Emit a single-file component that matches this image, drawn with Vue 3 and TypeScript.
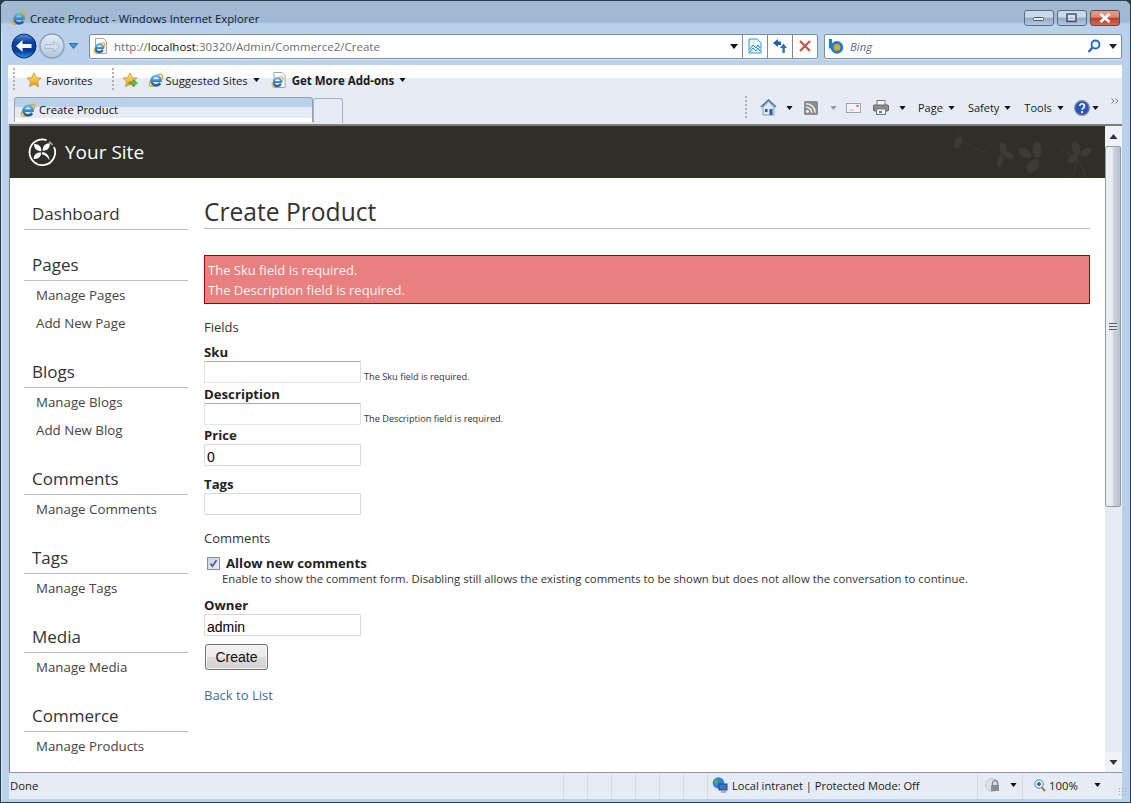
<script setup lang="ts">
interface MenuGroup {
  title: string
  items: string[]
}

const menu: MenuGroup[] = [
  { title: 'Dashboard', items: [] },
  { title: 'Pages', items: ['Manage Pages', 'Add New Page'] },
  { title: 'Blogs', items: ['Manage Blogs', 'Add New Blog'] },
  { title: 'Comments', items: ['Manage Comments'] },
  { title: 'Tags', items: ['Manage Tags'] },
  { title: 'Media', items: ['Manage Media'] },
  { title: 'Commerce', items: ['Manage Products'] },
]

const statusCells = [0, 1, 2, 3, 4, 5]
</script>

<template>
  <svg class="sprite" width="0" height="0">
    <defs>
      <linearGradient id="gold" x1="0" y1="0" x2="0" y2="1">
        <stop offset="0" stop-color="#fde27a" />
        <stop offset="1" stop-color="#ee9a16" />
      </linearGradient>
      <linearGradient id="backFill" x1="0" y1="0" x2="0" y2="1">
        <stop offset="0" stop-color="#5a92d8" />
        <stop offset="0.35" stop-color="#0b3fa0" />
        <stop offset="0.7" stop-color="#063a9a" />
        <stop offset="1" stop-color="#2a96ea" />
      </linearGradient>
      <linearGradient id="fwdFill" x1="0" y1="0" x2="0" y2="1">
        <stop offset="0" stop-color="#e4ecf5" />
        <stop offset="1" stop-color="#b3c6dd" />
      </linearGradient>
      <linearGradient id="ieBlue" x1="0" y1="0" x2="0" y2="1">
        <stop offset="0" stop-color="#5cb4ee" />
        <stop offset="1" stop-color="#1460b4" />
      </linearGradient>
      <symbol id="ie" viewBox="0 0 16 16">
        <ellipse cx="8" cy="8.3" rx="8" ry="3.8" transform="rotate(-40 8 8.3)" fill="none" stroke="#eda52a" stroke-width="1.5" />
        <path d="M4.4 8.6h8c0-2.8-1.7-4.6-4.3-4.6s-4.5 2.1-4.5 4.8 2 4.6 4.6 4.6c1.8 0 3.1-.8 4-2.2" fill="none" stroke="url(#ieBlue)" stroke-width="2.7" />
      </symbol>
      <symbol id="star" viewBox="0 0 16 16">
        <path d="M8 .8l2.2 4.7 5 .6-3.7 3.5 1 5.1L8 12.2l-4.5 2.5 1-5.1L.8 6.1l5-.6z" fill="url(#gold)" stroke="#c98a20" stroke-width=".7" />
      </symbol>
      <symbol id="drop" viewBox="0 0 8 5">
        <path d="M0 0h8L4 5z" />
      </symbol>
    </defs>
  </svg>

  <div class="win">
    <div class="title">
      <svg class="i16" viewBox="0 0 16 16"><use href="#ie" /></svg>
      <span class="title-text">Create Product - Windows Internet Explorer</span>
      <div class="caption">
        <div class="cap">
          <svg width="12" height="8" viewBox="0 0 12 8"><rect x=".5" y="3.5" width="10" height="3" rx="1" fill="#eef2f7" stroke="#47566b" /></svg>
        </div>
        <div class="cap">
          <svg width="12" height="10" viewBox="0 0 12 10"><rect x="1" y="1" width="9" height="7.5" fill="none" stroke="#47566b" stroke-width="1.5" /><rect x="3" y="3" width="5" height="3.5" fill="none" stroke="#eef2f7" /></svg>
        </div>
        <div class="cap close">
          <svg width="12" height="10" viewBox="0 0 12 10"><path d="M1.5 1l9 8M10.5 1l-9 8" stroke="#fff" stroke-width="2.6" /></svg>
        </div>
      </div>
    </div>

    <div class="addr">
      <svg class="nav" width="26" height="28" viewBox="0 0 26 28">
        <circle cx="13" cy="14" r="12" fill="url(#backFill)" stroke="#0b2d66" />
        <path d="M5 14l6.5-6v4h9v4h-9v4z" fill="#fff" />
      </svg>
      <svg class="nav fwd" width="26" height="28" viewBox="0 0 26 28">
        <circle cx="13" cy="14" r="12" fill="url(#fwdFill)" stroke="#8d9eb3" stroke-width="1.4" />
        <path d="M20.5 14.5l-6-5v3H6v4h8.5v3z" fill="#d4dfeb" stroke="#a2b3c8" stroke-width=".8" />
      </svg>
      <svg class="nav-drop" width="9" height="6" viewBox="0 0 8 5"><path d="M.3.3h7.4L4 4.7z" fill="#3aa0e0" stroke="#173b70" stroke-width=".6" /></svg>
      <div class="url-box">
        <svg class="page-ie" width="16" height="16" viewBox="0 0 16 16">
          <path d="M2.5 .5h8l3 3v12h-11z" fill="#fff" stroke="#9aa5b3" />
          <svg x="0" y="3" width="13" height="13" viewBox="0 0 16 16"><use href="#ie" /></svg>
        </svg>
        <span class="url"><span class="dim">http://</span>localhost<span class="dim">:30320/Admin/Commerce2/Create</span></span>
        <svg class="url-drop" width="8" height="5" viewBox="0 0 8 5" fill="#111"><use href="#drop" /></svg>
        <div class="url-btn">
          <svg width="16" height="16" viewBox="0 0 16 16">
            <path d="M2 1h8l4 4v10H2z" fill="#e9f6fd" stroke="#2a9ad8" />
            <path d="M3 11l3-4 3 3 2-3 2 3M3 14l3-4 3 3 2-3 2 3" fill="none" stroke="#2f8ccc" />
          </svg>
        </div>
        <div class="url-btn">
          <svg width="16" height="16" viewBox="0 0 16 16">
            <path d="M1 5l5-4v2.6h3V7H6v2z" fill="#1f5fa8" />
            <path d="M15 10l-3.6-4.5L8 10h2.4v5h2.4v-5z" fill="#2c72b8" />
          </svg>
        </div>
        <div class="url-btn">
          <svg width="14" height="14" viewBox="0 0 14 14"><path d="M2 2l10 10M12 2L2 12" stroke="#c0574c" stroke-width="2.3" /></svg>
        </div>
      </div>
      <div class="search-box">
        <svg width="18" height="16" viewBox="0 0 18 16">
          <path d="M2.5 1v9.5" stroke="#1d7fc9" stroke-width="3.2" />
          <circle cx="9" cy="9.4" r="4.8" fill="#f6a21f" stroke="#1d7fc9" stroke-width="3" />
        </svg>
        <span class="bing">Bing</span>
        <svg class="mag" width="14" height="15" viewBox="0 0 14 15">
          <circle cx="8.5" cy="5.5" r="4" fill="#e9f3fc" stroke="#2466b3" stroke-width="1.8" />
          <path d="M5.5 8.5L1.5 13" stroke="#2466b3" stroke-width="2.2" />
        </svg>
        <svg class="search-drop" width="8" height="5" viewBox="0 0 8 5" fill="#222"><use href="#drop" /></svg>
      </div>
    </div>

    <div class="favs">
      <i class="grip"></i>
      <svg class="fav-star" width="16" height="16" viewBox="0 0 16 16"><use href="#star" /></svg>
      <span class="fav-label first">Favorites</span>
      <i class="grip g2"></i>
      <svg class="i16 add" viewBox="0 0 16 16">
        <use href="#star" />
        <path d="M7 10h4V7.5l4.5 3.5-4.5 3.5V12H7z" fill="#5ac040" stroke="#2f8a28" stroke-width=".6" />
      </svg>
      <svg class="i16 sug" viewBox="0 0 16 16"><use href="#ie" /></svg>
      <span class="fav-label tight">Suggested Sites</span>
      <svg class="dd" width="7" height="4" viewBox="0 0 8 5"><use href="#drop" /></svg>
      <svg class="i16 addon" viewBox="0 0 16 16">
        <path d="M3 .5h8l3 3v12H3z" fill="#fff" stroke="#9aa5b3" />
        <svg x="0" y="3" width="13" height="13" viewBox="0 0 16 16"><use href="#ie" /></svg>
      </svg>
      <span class="fav-label bold">Get More Add-ons</span>
      <svg class="dd" width="7" height="4" viewBox="0 0 8 5"><use href="#drop" /></svg>
    </div>

    <div class="tabs">
      <div class="tab">
        <svg class="i16" viewBox="0 0 16 16"><use href="#ie" /></svg>
        <span>Create Product</span>
      </div>
      <div class="new-tab"></div>
      <div class="cmds">
        <i class="grip g3"></i>
        <svg class="home" width="17" height="17" viewBox="0 0 17 17">
          <path d="M1 8l7.5-7L16 8" fill="none" stroke="#3e78b4" stroke-width="1.6" />
          <path d="M3 8l5.5-5L14 8v8H3z" fill="#dfe7ef" stroke="#7f8ea0" stroke-width=".8" />
          <rect x="5" y="10" width="2.5" height="3" fill="#1f62a8" />
          <rect x="9.5" y="10" width="3" height="6" fill="#1f62a8" />
        </svg>
        <svg class="dd c1" width="7" height="4" viewBox="0 0 8 5"><use href="#drop" /></svg>
        <svg class="feed" width="14" height="14" viewBox="0 0 14 14">
          <rect width="14" height="14" rx="1.5" fill="#8d8d8d" />
          <circle cx="3.5" cy="10.5" r="1.4" fill="#eee" />
          <path d="M2.2 6.2a5.6 5.6 0 015.6 5.6M2.2 2.8a9 9 0 019 9" fill="none" stroke="#eee" stroke-width="1.6" />
        </svg>
        <svg class="dd c2" width="7" height="4" viewBox="0 0 8 5"><use href="#drop" /></svg>
        <svg class="mail" width="15" height="10" viewBox="0 0 15 10">
          <rect x=".5" y=".5" width="14" height="9" fill="#f4f4f4" stroke="#a5a5a5" />
          <path d="M3 7h5" stroke="#bdbdbd" />
          <rect x="10.5" y="2" width="2" height="2" fill="#d85a5a" />
        </svg>
        <svg class="printer" width="16" height="15" viewBox="0 0 16 15">
          <rect x="4" y=".5" width="8" height="5" fill="#fff" stroke="#777" />
          <rect x=".5" y="5" width="15" height="6" rx="1" fill="#8a8d92" stroke="#666" />
          <rect x="3.5" y="9" width="9" height="5.5" fill="#fff" stroke="#777" />
          <rect x="6" y="11" width="3" height="2" fill="#3d86c6" />
        </svg>
        <svg class="dd c3" width="7" height="4" viewBox="0 0 8 5"><use href="#drop" /></svg>
        <span class="cmd page">Page</span>
        <svg class="dd" width="7" height="4" viewBox="0 0 8 5"><use href="#drop" /></svg>
        <span class="cmd">Safety</span>
        <svg class="dd" width="7" height="4" viewBox="0 0 8 5"><use href="#drop" /></svg>
        <span class="cmd">Tools</span>
        <svg class="dd" width="7" height="4" viewBox="0 0 8 5"><use href="#drop" /></svg>
        <svg class="help" width="16" height="16" viewBox="0 0 16 16">
          <circle cx="8" cy="8" r="7.4" fill="#2a55b8" stroke="#8a93a3" stroke-width="1.2" />
          <path d="M5.8 6a2.3 2.3 0 114 1.6c-.9.8-1.7 1-1.7 2.2" fill="none" stroke="#fff" stroke-width="1.7" />
          <circle cx="8.1" cy="12.2" r="1.1" fill="#fff" />
        </svg>
        <svg class="dd c4" width="7" height="4" viewBox="0 0 8 5"><use href="#drop" /></svg>
        <svg class="more" width="8" height="6" viewBox="0 0 8 6"><path d="M.5.5L3 3 .5 5.5M4.5.5L7 3 4.5 5.5" fill="none" stroke="#6d7a8c" /></svg>
      </div>
    </div>

    <div class="pane">
      <div class="view">
        <header class="site">
          <svg class="logo" width="30" height="30" viewBox="0 0 30 30">
            <path d="M19.5 3.2A12.8 12.8 0 1 0 27 10" fill="none" stroke="#fff" stroke-width="1.8" />
            <path d="M22 4.8A12.8 12.8 0 0 1 25.6 8" fill="none" stroke="#a9a9a4" stroke-width="1.6" />
            <path d="M14.3 14.3C9.5 14 6.6 11.2 7.2 7c4.2-.4 7.6 2.6 7.1 7.3z" fill="#fff" />
            <path d="M15.8 13.6c-.2-4.6 2.2-7.2 7-7.4.4 4.4-2.4 7.8-7 7.4z" fill="#fff" />
            <path d="M14 15.6c-4.4-.4-7.2 2-7.4 6.4 4.4.4 7.8-2 7.4-6.4z" fill="#fff" />
            <path d="M15 15.2c3.6-.2 7.4 2.4 7.6 8.4-1.8-3.4-4.2-5.6-7.8-6.4z" fill="#fff" />
          </svg>
          <span class="site-name">Your Site</span>
          <svg class="leaves" width="160" height="52" viewBox="0 0 160 52" fill="#3c3c35">
            <path d="M12 0c2 12 12 24 30 26M116 24c12 4 22 12 24 28M132 30c-1 10-2 18-6 22" fill="none" stroke="#3c3c35" />
            <ellipse cx="13" cy="17" rx="3.5" ry="6" transform="rotate(25 13 17)" />
            <ellipse cx="58" cy="22" rx="3.5" ry="6" transform="rotate(-10 58 22)" />
            <ellipse cx="63" cy="29" rx="3" ry="6" transform="rotate(-65 63 29)" />
            <ellipse cx="55" cy="35" rx="3" ry="6" transform="rotate(15 55 35)" />
            <ellipse cx="80" cy="27" rx="4" ry="7" transform="rotate(-60 80 27)" />
            <ellipse cx="92" cy="24" rx="4.5" ry="8" />
            <ellipse cx="88" cy="40" rx="5" ry="8" transform="rotate(40 88 40)" />
            <ellipse cx="131" cy="22" rx="4" ry="7" transform="rotate(-15 131 22)" />
            <ellipse cx="141" cy="26" rx="3.5" ry="6" transform="rotate(60 141 26)" />
            <ellipse cx="128" cy="32" rx="3.5" ry="6.5" transform="rotate(50 128 32)" />
          </svg>
        </header>
        <div class="body">
          <aside class="side">
            <section v-for="group in menu" :key="group.title" class="group">
              <h3>{{ group.title }}</h3>
              <ul v-if="group.items.length">
                <li v-for="item in group.items" :key="item">{{ item }}</li>
              </ul>
            </section>
          </aside>
          <main class="main">
            <h1>Create Product</h1>
            <div class="errors">
              <div>The Sku field is required.</div>
              <div>The Description field is required.</div>
            </div>
            <div class="legend fields">Fields</div>
            <label class="lbl sku">Sku</label>
            <div class="line"><input class="txt invalid" /><span class="err">The Sku field is required.</span></div>
            <label class="lbl desc">Description</label>
            <div class="line"><input class="txt invalid" /><span class="err">The Description field is required.</span></div>
            <label class="lbl price">Price</label>
            <div class="line"><input class="txt" value="0" /></div>
            <label class="lbl tags">Tags</label>
            <div class="line"><input class="txt" /></div>
            <div class="legend comments">Comments</div>
            <div class="check">
              <span class="box">
                <svg width="9" height="9" viewBox="0 0 9 9"><path d="M1.5 4.5l2 2.8L7.5 1" fill="none" stroke="#4a5f8a" stroke-width="1.6" /></svg>
              </span>
              <span class="lbl">Allow new comments</span>
            </div>
            <div class="hint">Enable to show the comment form. Disabling still allows the existing comments to be shown but does not allow the conversation to continue.</div>
            <label class="lbl owner">Owner</label>
            <div class="line"><input class="txt" value="admin" /></div>
            <button class="create" type="button">Create</button>
            <a class="back">Back to List</a>
          </main>
        </div>
      </div>
      <div class="scroll">
        <div class="arrow"><svg width="9" height="5" viewBox="0 0 8 5"><path d="M4 0l4 5H0z" fill="#333" /></svg></div>
        <div class="thumb">
          <div class="thumb-lines"></div>
        </div>
        <div class="rail"></div>
        <div class="arrow"><svg width="9" height="5" viewBox="0 0 8 5"><path d="M0 0h8L4 5z" fill="#333" /></svg></div>
      </div>
    </div>

    <div class="status">
      <span class="done">Done</span>
      <i v-for="c in statusCells" :key="c" class="cell"></i>
      <div class="zone">
        <svg width="16" height="16" viewBox="0 0 16 16">
          <circle cx="6.5" cy="6" r="5.8" fill="#2f86d8" />
          <path d="M3 2c2 0 3 1 3 3S3 7 2 5zM8 7c2-1 3 0 3 2l-2 2z" fill="#4fb348" />
          <rect x="7" y="7" width="8" height="6" fill="#3a78c4" stroke="#20487e" />
          <path d="M9 15h5" stroke="#8a94a3" stroke-width="1.4" />
        </svg>
        <span>Local intranet | Protected Mode: Off</span>
      </div>
      <div class="sec">
        <svg width="16" height="16" viewBox="0 0 16 16">
          <circle cx="7" cy="8" r="6.5" fill="#dfe3e9" stroke="#bcc3cc" />
          <rect x="6" y="8" width="8" height="6" fill="#8a8d92" />
          <path d="M7.5 8V6a2.5 2.5 0 015 0v2" fill="none" stroke="#8a8d92" stroke-width="1.3" />
        </svg>
        <svg class="dd" width="7" height="4" viewBox="0 0 8 5"><use href="#drop" /></svg>
      </div>
      <div class="zoom">
        <svg width="12" height="13" viewBox="0 0 12 13">
          <circle cx="5" cy="5" r="4.3" fill="#dbe8f7" stroke="#6a8ab0" />
          <path d="M3 5h4M5 3v4" stroke="#1f5fb0" stroke-width="1.6" />
          <path d="M8 8.5l3 3.5" stroke="#a47a3a" stroke-width="2" />
        </svg>
        <span>100%</span>
        <svg class="dd zd" width="7" height="4" viewBox="0 0 8 5"><use href="#drop" /></svg>
        <i class="resize"></i>
      </div>
    </div>
  </div>
</template>

<style scoped>
.sprite {
  position: absolute;
}

.win {
  box-sizing: border-box;
  width: 1131px;
  height: 803px;
  display: flex;
  flex-direction: column;
  overflow: hidden;
  background: #b9d1ea;
  border: 1px solid #24404f;
  border-radius: 7px 7px 0 0;
  box-shadow: inset 1px 1px 0 #dbe7f4;
  font-family: "Open Sans", "Liberation Sans", sans-serif;
  font-size: 11.3px;
  color: #1a1a1a;
}

.i16 {
  width: 16px;
  height: 16px;
  flex: none;
}

.dd {
  flex: none;
  fill: #111;
}

.title {
  flex: none;
  box-sizing: border-box;
  height: 30px;
  display: flex;
  align-items: center;
  padding: 4px 10px 0 10px;
  background: linear-gradient(#a2b9d4 0, #a2b9d4 21px, #b9d1ea 23px);
}

.title-text {
  margin-left: 3px;
  color: #0f2030;
}

.caption {
  margin-left: auto;
  display: flex;
  gap: 3px;
}

.cap {
  width: 30px;
  height: 16px;
  box-sizing: border-box;
  display: flex;
  align-items: center;
  justify-content: center;
  border: 1px solid #5d6f85;
  border-radius: 3px;
  background: linear-gradient(#c9d8ea 0, #c9d8ea 45%, #92a9c6 50%, #b4c8df 100%);
}

.cap.close {
  background: linear-gradient(#e2a08e 0, #d68673 45%, #b83f2c 50%, #cf6a55 100%);
  border-color: #6e4a44;
}

.addr {
  flex: none;
  box-sizing: border-box;
  height: 34px;
  display: flex;
  align-items: center;
  padding: 0 7px 4px 10px;
}

.nav.fwd {
  margin-left: 2px;
}

.nav-drop {
  margin: 0 11px 0 4px;
}

.url-box {
  width: 729px;
  height: 25px;
  box-sizing: border-box;
  display: flex;
  align-items: center;
  background: #fff;
  border: 1px solid #7e8a98;
  border-radius: 2px;
  box-shadow: 0 1px 0 #d9e6f4;
}

.page-ie {
  margin-left: 3px;
}

.url {
  margin-left: 5px;
  font-size: 11.5px;
  color: #111;
}

.dim {
  color: #6d6d6d;
}

.url-drop {
  margin-left: auto;
  margin-right: 1px;
}

.url-btn {
  width: 25px;
  height: 100%;
  display: flex;
  align-items: center;
  justify-content: center;
  border-left: 1px solid #7e8a98;
  box-sizing: border-box;
}

.url-drop + .url-btn {
  margin-left: 3px;
}

.search-box {
  width: 298px;
  height: 25px;
  margin-left: 6px;
  box-sizing: border-box;
  display: flex;
  align-items: center;
  padding: 0 4px 0 3px;
  background: #fff;
  border: 1px solid #7e8a98;
  border-radius: 2px;
  box-shadow: 0 1px 0 #d9e6f4;
}

.bing {
  margin-left: 4px;
  font-style: italic;
  color: #5a6a80;
}

.mag {
  margin-left: auto;
}

.search-drop {
  margin-left: 8px;
}

.favs {
  flex: none;
  box-sizing: border-box;
  height: 32px;
  margin: 0 8px 0 7px;
  padding-bottom: 2px;
  display: flex;
  align-items: center;
  background: linear-gradient(#fff 0, #fff 13px, #e6ecf5 13px);
}

.grip {
  flex: none;
  width: 2px;
  height: 24px;
  margin-left: 5px;
  background: repeating-linear-gradient(#aab1bb 0, #aab1bb 2px, transparent 2px, transparent 4px);
}

.fav-star {
  margin-left: 11px;
}

.fav-label {
  margin-left: 5px;
}

.fav-label.first {
  margin-left: 4px;
  font-size: 11px;
}

.fav-label.tight {
  margin-left: 2px;
}

.fav-label.bold {
  margin-left: 5px;
  font-size: 11.5px;
  font-weight: 700;
}

.g2 {
  margin-left: 19px;
}

.add {
  margin-left: 8px;
}

.sug {
  margin-left: 10px;
}

.fav-label + .dd {
  margin-left: 5px;
}

.addon {
  margin-left: 11px;
}

.tabs {
  flex: none;
  height: 27px;
  margin: 0 8px 0 7px;
  display: flex;
  background: #e6ecf5;
}

.tab {
  box-sizing: border-box;
  width: 299px;
  height: 25px;
  margin-left: 6px;
  display: flex;
  align-items: flex-start;
  gap: 3px;
  padding: 4px 0 0 5px;
  border: 1px solid #9aa4b2;
  border-bottom: 0;
  border-radius: 3px 3px 0 0;
  background: linear-gradient(#b9d1ea 0, #b9d1ea 9px, #e6ecf5 9px, #e6ecf5 20px, #fff 20px);
  color: #111;
}

.new-tab {
  box-sizing: border-box;
  width: 30px;
  height: 25px;
  margin-top: 1px;
  border: 1px solid #a7b0bc;
  border-bottom: 0;
  border-radius: 3px 3px 0 0;
  background: #e6ecf5;
}

.cmds {
  flex: 1;
  display: flex;
  align-items: center;
  padding-bottom: 6px;
  position: relative;
}

.g3 {
  margin-left: 402px;
}

.home {
  margin-left: 13px;
}

.c1 {
  margin-left: 9px;
}

.feed {
  margin-left: 11px;
}

.c2 {
  margin-left: 12px;
  fill: #9a9a9a;
}

.mail {
  margin-left: 9px;
}

.printer {
  margin-left: 12px;
}

.c3 {
  margin-left: 10px;
}

.cmd {
  margin-left: 13px;
  font-size: 11px;
}

.cmd.page {
  margin-left: 12px;
}

.cmd + .dd {
  margin-left: 5px;
}

.help {
  margin-left: 10px;
}

.c4 {
  margin-left: 2px;
}

/* chevron hangs over the command bar's top edge */
.more {
  position: absolute;
  right: 3px;
  top: 1px;
}

.pane {
  flex: 1;
  min-height: 0;
  display: flex;
  margin: 0 8px;
  border-top: 2px solid #7d7d7d;
}

.view {
  flex: 1;
  min-width: 0;
  overflow: hidden;
  background: #fff;
  border-left: 1px solid #7d7d7d;
  font-size: 13px;
  color: #333;
}

.site {
  height: 52px;
  display: flex;
  align-items: center;
  padding-left: 17px;
  background: #2f2f27;
  position: relative;
}

.site-name {
  margin-left: 8px;
  font-size: 19px;
  color: #fff;
}

.leaves {
  position: absolute;
  right: 0;
  top: 0;
}

.body {
  display: flex;
  padding: 0 15px 0 14px;
}

.side {
  flex: none;
  width: 164px;
  padding-top: 26px;
}

.group + .group {
  margin-top: 25px;
}

.group h3 {
  margin: 0;
  padding: 0 0 5px 8px;
  border-bottom: 1px solid #bdbdbd;
  font-size: 17px;
  font-weight: 400;
  line-height: 20px;
  color: #333;
}

.group ul {
  margin: 4px 0 0;
  padding: 0 0 4px;
  list-style: none;
}

.group li {
  padding-left: 12px;
  font-size: 13.3px;
  line-height: 20px;
  color: #444;
}

.group li + li {
  margin-top: 8px;
}

.main {
  flex: 1;
  min-width: 0;
  margin-left: 16px;
  padding-top: 18px;
  display: flex;
  flex-direction: column;
  align-items: flex-start;
}

h1 {
  align-self: stretch;
  margin: 0;
  font-size: 24.6px;
  font-weight: 400;
  line-height: 32px;
  color: #333;
  border-bottom: 1px solid #bdbdbd;
}

.errors {
  align-self: stretch;
  box-sizing: border-box;
  height: 49px;
  margin-top: 26px;
  padding: 4px 3px 3px;
  border: 1px solid #990808;
  background: #e88080;
  color: #fdf3f3;
  line-height: 20px;
}

.legend {
  line-height: 20px;
  color: #333;
}

.fields {
  margin-top: 13px;
}

.comments {
  margin-top: 13px;
}

.lbl {
  display: block;
  font-size: 13.2px;
  font-weight: 700;
  line-height: 18px;
  color: #222;
}

.sku {
  margin-top: 6px;
}

.desc {
  margin-top: 2px;
}

.price {
  margin-top: 1px;
}

.tags {
  margin-top: 9px;
}

.owner {
  margin-top: 10px;
}

.line {
  display: flex;
  align-items: flex-end;
}

.txt {
  box-sizing: border-box;
  width: 157px;
  height: 22px;
  padding: 3px 2px 0;
  font-family: "Liberation Sans", Arial, sans-serif;
  font-size: 14px;
  color: #000;
  border: 1px solid #d6d8dc;
  border-radius: 1px;
  outline: none;
  background: #fff;
}

.txt.invalid {
  border-color: #abadb3 #dbdfe6 #e3e9ef #e2e3ea;
}

.err {
  margin-left: 3px;
  font-size: 9.2px;
  line-height: 13px;
  color: #333;
}

.check {
  margin-top: 6px;
  margin-left: 3px;
  display: flex;
  align-items: center;
  gap: 6px;
}

.box {
  box-sizing: border-box;
  width: 13px;
  height: 13px;
  display: flex;
  align-items: center;
  justify-content: center;
  border: 1px solid #8e8f8f;
  background: linear-gradient(135deg, #c9d3e6, #e9eef6);
}

.hint {
  margin: -1px 0 0 18px;
  font-size: 11.38px;
  line-height: 15px;
  color: #333;
}

.create {
  margin: 8px 0 0 1px;
  width: 63px;
  height: 26px;
  padding: 0;
  border: 1px solid #707070;
  border-radius: 3px;
  box-shadow: inset 0 0 0 1px #f6f6f6;
  background: linear-gradient(#f2f2f2 0, #ebebeb 48%, #dddddd 50%, #cfcfcf 100%);
  font-family: "Liberation Sans", Arial, sans-serif;
  font-size: 14px;
  color: #111;
}

.back {
  margin-top: 15px;
  line-height: 20px;
  color: #3b6d9c;
}

.scroll {
  flex: none;
  width: 17px;
  display: flex;
  flex-direction: column;
  background: #e6ecf5;
}

.arrow {
  flex: none;
  height: 20px;
  display: flex;
  align-items: center;
  justify-content: center;
  background: #eef3fa;
}

.thumb {
  flex: none;
  box-sizing: border-box;
  height: 361px;
  margin: 0 1px 0 0;
  display: flex;
  align-items: center;
  justify-content: center;
  border: 1px solid #979ca3;
  border-radius: 2px;
  background: linear-gradient(90deg, #e9eef6 0, #e9eef6 45%, #d2d6dd 50%, #b5bfce 100%);
}

.thumb-lines {
  width: 8px;
  height: 8px;
  background: repeating-linear-gradient(#5c5f66 0, #5c5f66 1px, #dfe3ea 1px, #dfe3ea 3px);
}

.rail {
  flex: 1;
}

.status {
  flex: none;
  height: 26px;
  margin: 0 8px;
  display: flex;
  align-items: center;
  background: #e6ecf5;
  border-top: 1px solid #8d98a6;
  border-bottom: 3px solid #b9d1ea;
}

.done {
  width: 554px;
  padding: 0 0 2px 1px;
  box-sizing: border-box;
  flex: none;
}

.cell {
  flex: none;
  box-sizing: border-box;
  width: 24px;
  height: 100%;
  border-left: 1px solid #d3dae4;
}

.zone {
  flex: none;
  width: 270px;
  height: 100%;
  box-sizing: border-box;
  display: flex;
  align-items: center;
  gap: 4px;
  padding: 0 0 2px 4px;
  font-size: 11.1px;
  border-left: 1px solid #d3dae4;
}

.sec {
  flex: none;
  width: 45px;
  height: 100%;
  box-sizing: border-box;
  display: flex;
  align-items: center;
  gap: 9px;
  padding: 0 0 2px 7px;
  border-left: 1px solid #d3dae4;
}

.zoom {
  flex: 1;
  height: 100%;
  box-sizing: border-box;
  display: flex;
  align-items: center;
  gap: 3px;
  padding: 0 0 2px 11px;
  border-left: 1px solid #d3dae4;
}

.zd {
  margin-left: 13px;
}

.resize {
  width: 9px;
  height: 9px;
  margin: 12px 0 0 14px;
  background: radial-gradient(circle, #9aa3b0 0, #9aa3b0 1px, transparent 1px) 0 0 / 3px 3px;
}
</style>

<style>
html,
body {
  margin: 0;
  background: #2a3a44;
}
</style>
